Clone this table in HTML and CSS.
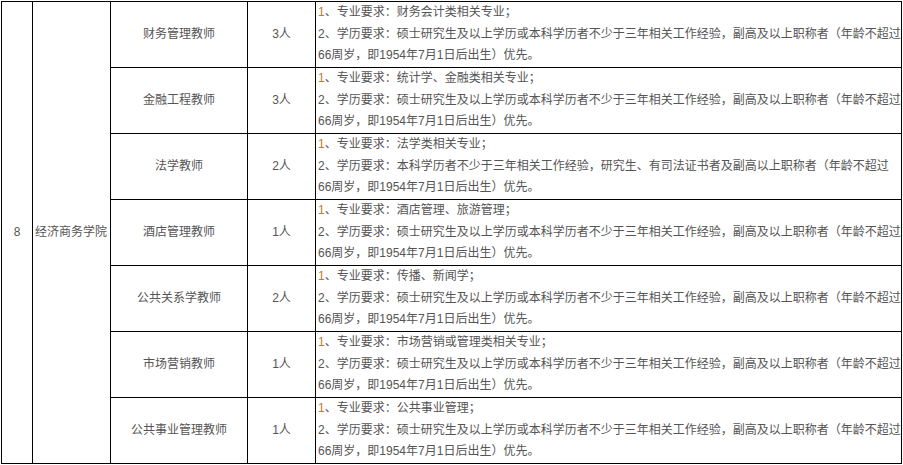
FILE: index.html
```html
<!DOCTYPE html>
<html lang="zh-CN">
<head>
<meta charset="utf-8">
<title>招聘岗位</title>
<link rel="stylesheet" href="styles.css">
</head>
<body>
<table class="jobs">
  <colgroup>
    <col class="c-no">
    <col class="c-dept">
    <col class="c-post">
    <col class="c-num">
    <col class="c-req">
  </colgroup>
  <tbody>
    <tr>
      <td class="center" rowspan="7">8</td>
      <td class="left" rowspan="7">经济商务学院</td>
      <td class="center">财务管理教师</td>
      <td class="center">3人</td>
      <td class="req"><span class="hl">1</span>、专业要求：财务会计类相关专业；<br>2、学历要求：硕士研究生及以上学历或本科学历者不少于三年相关工作经验，副高及以上职称者（年龄不超过<br>66周岁，即1954年7月1日后出生）优先。</td>
    </tr>
    <tr>
      <td class="center">金融工程教师</td>
      <td class="center">3人</td>
      <td class="req"><span class="hl">1</span>、专业要求：统计学、金融类相关专业；<br>2、学历要求：硕士研究生及以上学历或本科学历者不少于三年相关工作经验，副高及以上职称者（年龄不超过<br>66周岁，即1954年7月1日后出生）优先。</td>
    </tr>
    <tr>
      <td class="center">法学教师</td>
      <td class="center">2人</td>
      <td class="req"><span class="hl">1</span>、专业要求：法学类相关专业；<br>2、学历要求：本科学历者不少于三年相关工作经验，研究生、有司法证书者及副高以上职称者（年龄不超过<br>66周岁，即1954年7月1日后出生）优先。</td>
    </tr>
    <tr>
      <td class="center">酒店管理教师</td>
      <td class="center">1人</td>
      <td class="req"><span class="hl">1</span>、专业要求：酒店管理、旅游管理；<br>2、学历要求：硕士研究生及以上学历或本科学历者不少于三年相关工作经验，副高及以上职称者（年龄不超过<br>66周岁，即1954年7月1日后出生）优先。</td>
    </tr>
    <tr>
      <td class="center">公共关系学教师</td>
      <td class="center">2人</td>
      <td class="req"><span class="hl">1</span>、专业要求：传播、新闻学；<br>2、学历要求：硕士研究生及以上学历或本科学历者不少于三年相关工作经验，副高及以上职称者（年龄不超过<br>66周岁，即1954年7月1日后出生）优先。</td>
    </tr>
    <tr>
      <td class="center">市场营销教师</td>
      <td class="center">1人</td>
      <td class="req"><span class="hl">1</span>、专业要求：市场营销或管理类相关专业；<br>2、学历要求：硕士研究生及以上学历或本科学历者不少于三年相关工作经验，副高及以上职称者（年龄不超过<br>66周岁，即1954年7月1日后出生）优先。</td>
    </tr>
    <tr>
      <td class="center">公共事业管理教师</td>
      <td class="center">1人</td>
      <td class="req"><span class="hl">1</span>、专业要求：公共事业管理；<br>2、学历要求：硕士研究生及以上学历或本科学历者不少于三年相关工作经验，副高及以上职称者（年龄不超过<br>66周岁，即1954年7月1日后出生）优先。</td>
    </tr>
  </tbody>
</table>
</body>
</html>
```

FILE: styles.css
```css
html, body {
  margin: 0;
  padding: 0;
  background: #ffffff;
}

body {
  padding: 1px 0 0 1px;
  font-family: "Liberation Sans", "Noto Sans CJK SC", sans-serif;
  font-size: 12px;
  color: #555555;
  text-spacing-trim: space-all;
  text-autospace: no-autospace;
  font-kerning: none;
  font-feature-settings: "halt" 0, "chws" 0, "palt" 0;
}

.jobs {
  border-collapse: collapse;
  table-layout: fixed;
  width: 901px;
}

.c-no { width: 31px; }
.c-dept { width: 78px; }
.c-post { width: 137px; }
.c-num { width: 68px; }
.c-req { width: 586px; }

.jobs td {
  border: 1px solid #000000;
  padding: 0 0 0 2px;
  height: 65px;
  line-height: 21.67px;
  vertical-align: middle;
  white-space: nowrap;
  overflow: hidden;
}

.jobs td.center {
  text-align: center;
  padding: 0;
}

.jobs td.left {
  text-align: left;
}

.jobs td.req {
  text-align: left;
}

.hl {
  color: #c07a30;
}
```
